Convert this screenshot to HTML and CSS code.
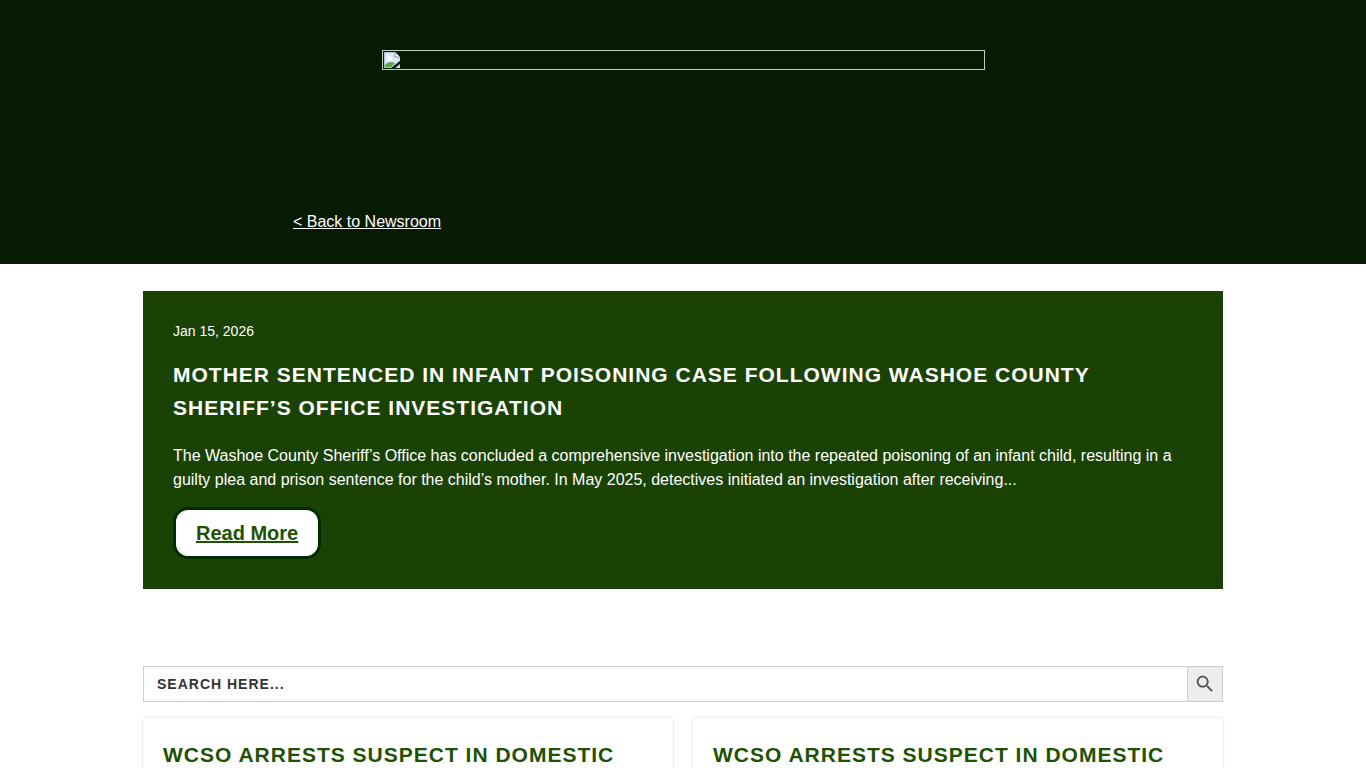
FILE: index.html
```
<!DOCTYPE html>
<html lang="en">
<head>
    <meta charset="UTF-8">
    <meta name="viewport" content="width=device-width, initial-scale=1.0">
    <title>Newsroom</title>
    <link rel="stylesheet" href="styles.css">
</head>
<body>
    <header class="site-header">
        <div class="banner">
            <svg class="banner-icon" width="16" height="16" viewBox="0 0 16 16" aria-hidden="true">
                <path d="M0 0h11l5 5v4l-9 7H0z" fill="#c6d8f5"/>
                <path d="M1 1h9v5h5v2l-8 7H1z" fill="#dce8fb"/>
                <path d="M3 6a2 2 0 0 1 4-1 2 2 0 0 1 1 3H3z" fill="#fff"/>
                <path d="M1 15v-2c2-3 6-4 10-2l-4 4z" fill="#5aa846"/>
                <path d="M11 0l5 5h-5z" fill="#f8faff" stroke="#8d9bb5"/>
                <path d="M0 0v16M0 0h10M0 16h7" fill="none" stroke="#9aa5ba"/>
                <path d="M16 12v4h-5z" fill="#c6d8f5"/>
            </svg>
        </div>
        <nav class="header-nav">
            <a href="#">&lt; Back to Newsroom</a>
        </nav>
    </header>

    <main class="container">
        <article class="featured">
            <time class="featured-date" datetime="2026-01-15">Jan 15, 2026</time>
            <h2>Mother Sentenced in Infant Poisoning Case Following Washoe County Sheriff’s Office Investigation</h2>
            <p>The Washoe County Sheriff’s Office has concluded a comprehensive investigation into the repeated poisoning of an infant child, resulting in a guilty plea and prison sentence for the child’s mother. In May 2025, detectives initiated an investigation after receiving...</p>
            <a class="read-more" href="#">Read More</a>
        </article>

        <form class="search-form">
            <input type="search" placeholder="SEARCH HERE..." aria-label="Search here">
            <button type="submit" aria-label="Search">
                <svg width="22" height="22" viewBox="0 0 24 24" aria-hidden="true">
                    <path fill="#555" d="M15.5 14h-.79l-.28-.27C15.41 12.59 16 11.11 16 9.5 16 5.91 13.09 3 9.5 3S3 5.91 3 9.5 5.91 16 9.5 16c1.61 0 3.09-.59 4.23-1.57l.27.28v.79l5 4.99L20.49 19l-4.99-5zm-6 0C7.01 14 5 11.99 5 9.5S7.01 5 9.5 5 14 7.01 14 9.5 11.99 14 9.5 14z"/>
                </svg>
            </button>
        </form>

        <section class="news-grid">
            <article class="news-card">
                <h2>WCSO Arrests Suspect in Domestic</h2>
            </article>
            <article class="news-card">
                <h2>WCSO Arrests Suspect in Domestic</h2>
            </article>
        </section>
    </main>
</body>
</html>
```
FILE: styles.css
```
* {
    box-sizing: border-box;
}
body {
    font-family: "Liberation Sans", Arial, sans-serif;
    font-size: 16px;
    line-height: 24px;
    margin: 0;
    background-color: #fff;
}
h2 {
    margin: 0;
    font-size: 21px;
    line-height: 33px;
    letter-spacing: 1px;
    text-transform: uppercase;
}

/* Header */
.site-header {
    padding: 50px 20px 30px;
    background-color: #071a02;
}
.banner {
    display: flex;
    max-width: 603px;
    height: 20px;
    margin: 0 auto;
    padding: 1px;
    border: 1px solid #c0cfb9;
}
.header-nav {
    max-width: 780px;
    margin: 140px auto 0;
}
.header-nav a {
    color: #fff;
}

/* Featured story */
.container {
    max-width: 1080px;
    margin: 27px auto 0;
}
.featured {
    padding: 30px;
    background-color: #1a4204;
    color: #fff;
}
.featured-date {
    display: block;
    font-size: 14px;
    line-height: 21px;
}
.featured h2 {
    margin-top: 16px;
}
.featured p {
    margin: 20px 0 15px;
}
.read-more {
    display: block;
    width: fit-content;
    padding: 8px 20px;
    border: 3px solid #022b02;
    border-radius: 15px;
    background-color: #fff;
    color: #1f5103;
    font-size: 20px;
    font-weight: bold;
    line-height: 30px;
}

/* Search */
.search-form {
    display: flex;
    height: 36px;
    margin: 77px 0 16px;
}
.search-form input {
    flex: 1;
    min-width: 0;
    margin: 0;
    padding: 0 13px;
    border: 1px solid #ccc;
    border-right: none;
    border-radius: 0;
    background-color: #fff;
    color: #333;
    font-family: inherit;
    font-size: 14px;
    font-weight: bold;
    letter-spacing: 1px;
    appearance: none;
}
.search-form input::placeholder {
    color: #333;
}
.search-form button {
    display: flex;
    align-items: center;
    justify-content: center;
    width: 36px;
    padding: 0;
    border: 1px solid #ccc;
    background-color: #ededed;
    cursor: pointer;
}

/* News cards */
.news-grid {
    display: grid;
    grid-template-columns: 1fr 1fr;
    gap: 20px;
}
.news-card {
    padding: 20px;
    box-shadow: 0 0 2px rgba(0, 0, 0, 0.2);
}
.news-card h2 {
    color: #1f5103;
}
```
